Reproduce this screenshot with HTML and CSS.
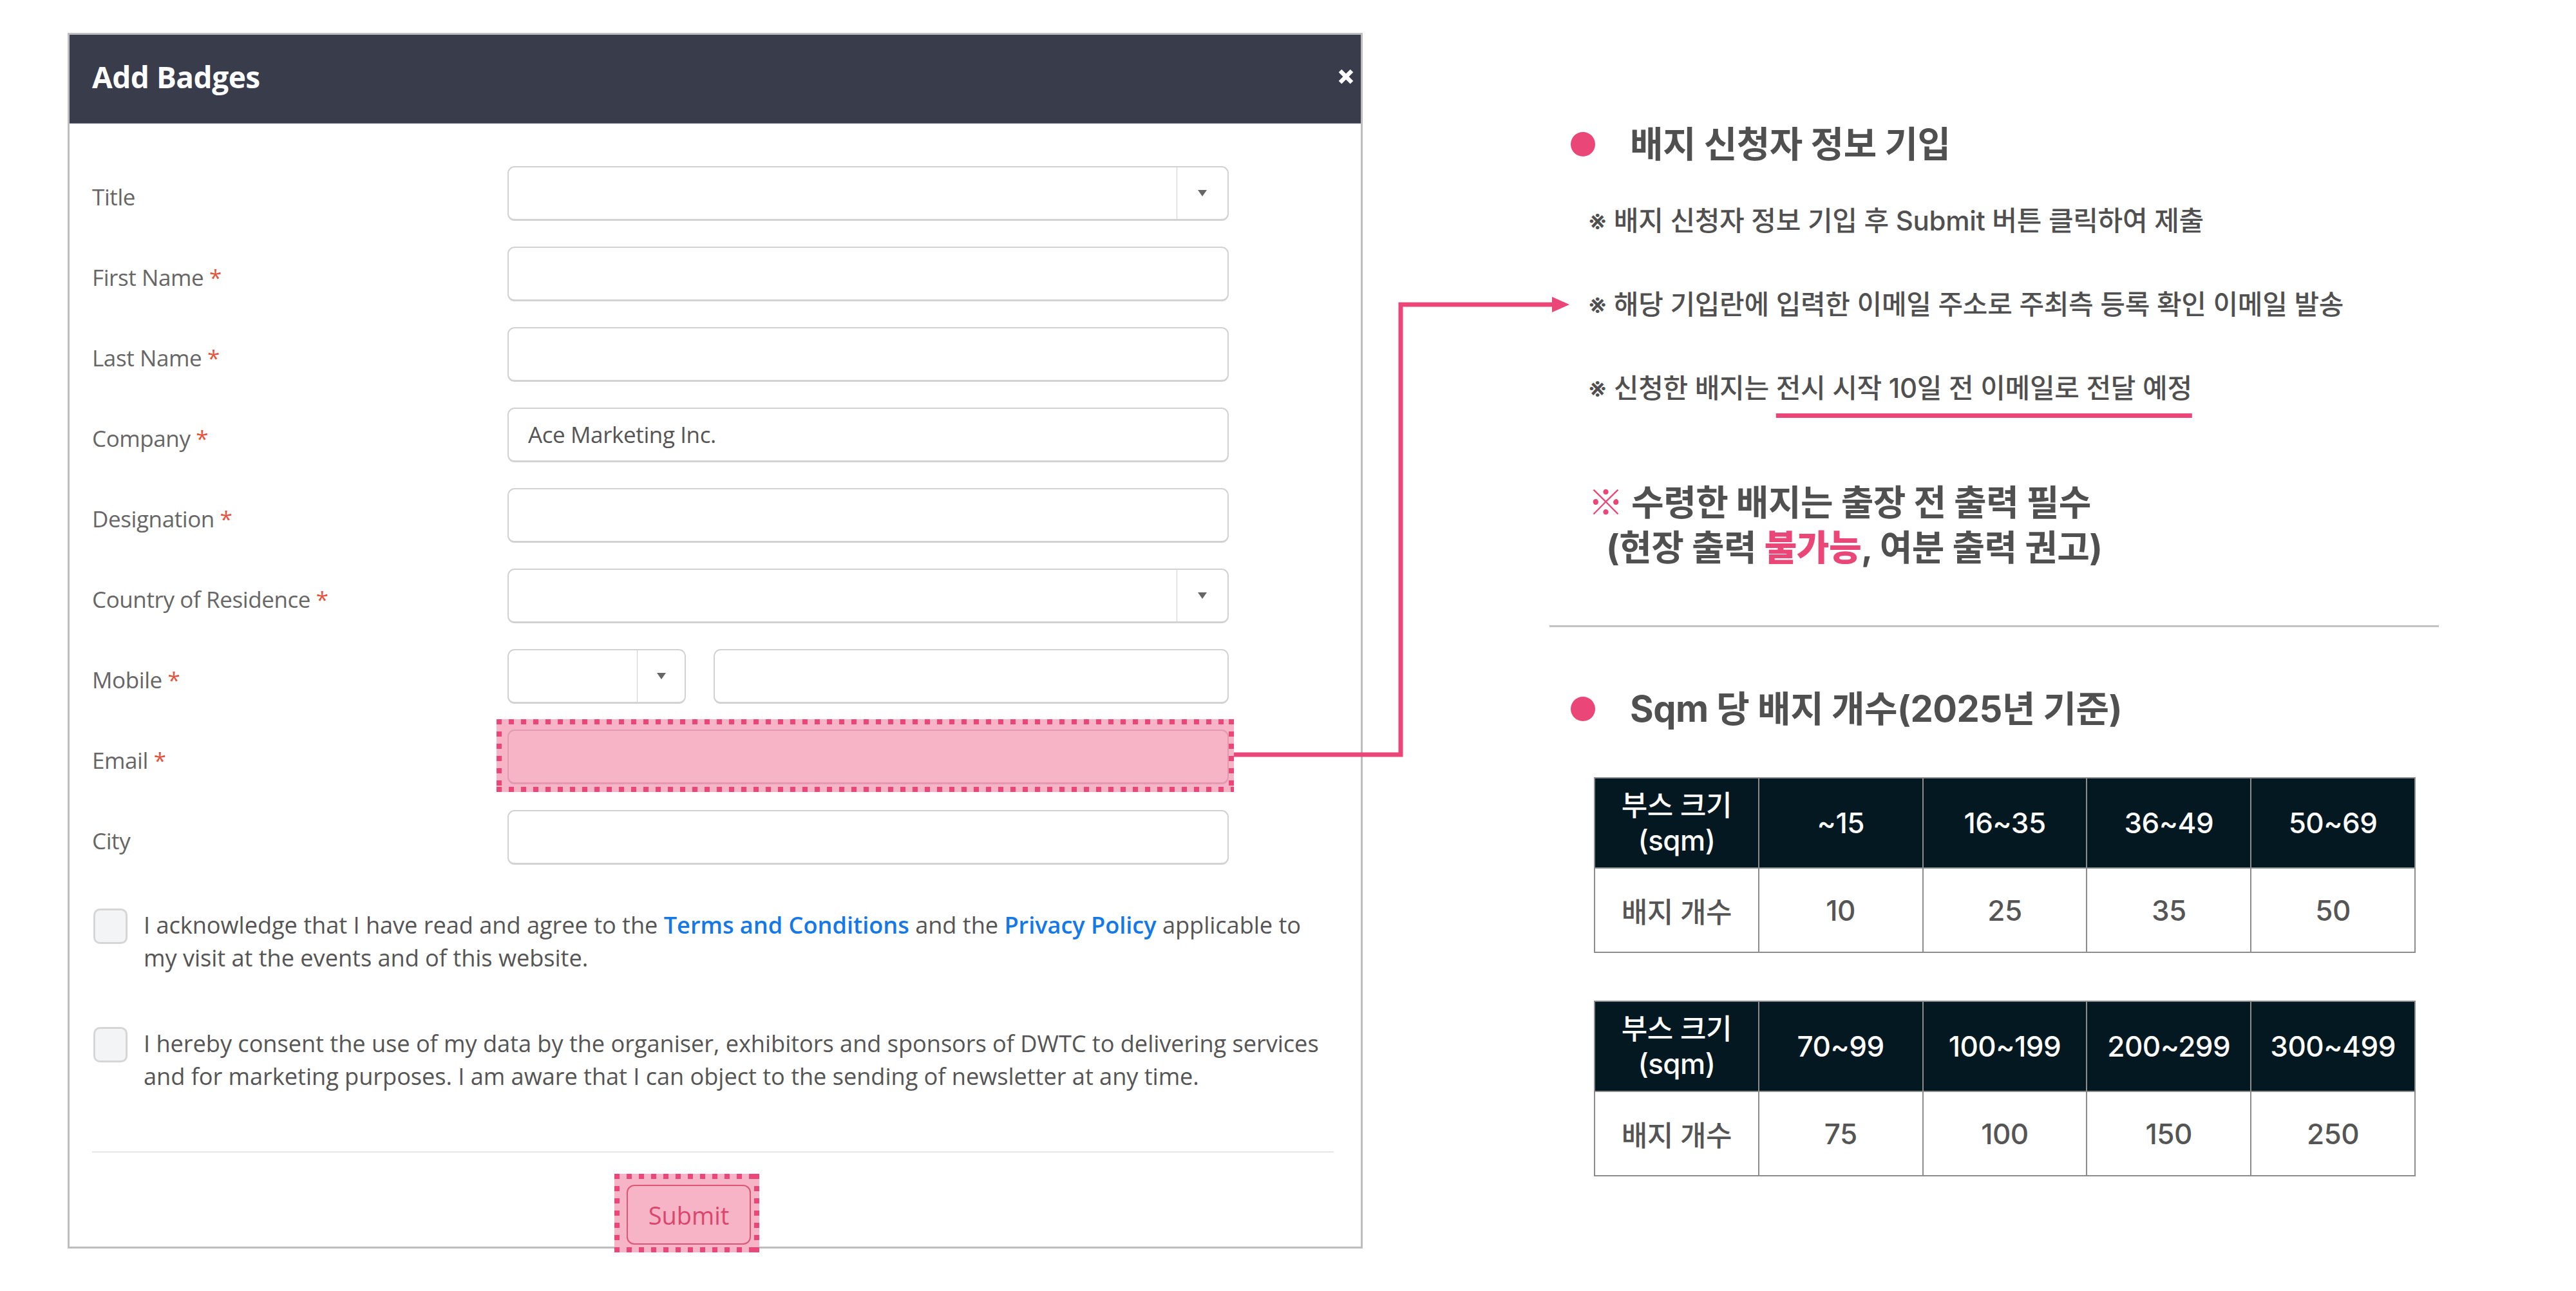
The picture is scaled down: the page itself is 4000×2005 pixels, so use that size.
FILE: index.html
```html
<!DOCTYPE html>
<html lang="ko">
<head>
    <meta charset="UTF-8">
    <title>Add Badges 안내</title>
    <link rel="stylesheet" href="styles.css">
</head>
<body>
<div class="page">

    <!-- Modal: badge form -->
    <div class="modal">
        <div class="modal-head">
            <h2>Add Badges</h2>
            <span class="close">
                <svg width="26" height="26" viewBox="0 0 26 26"><path d="M4 4 L22 22 M22 4 L4 22" stroke="#fff" stroke-width="6.5"/></svg>
            </span>
        </div>

        <div class="modal-body">
            <div class="form-row">
                <label>Title</label>
                <div class="select"><span class="select-btn"><i class="caret"></i></span></div>
            </div>
            <div class="form-row">
                <label>First Name <em>*</em></label>
                <div class="input"></div>
            </div>
            <div class="form-row">
                <label>Last Name <em>*</em></label>
                <div class="input"></div>
            </div>
            <div class="form-row">
                <label>Company <em>*</em></label>
                <div class="input">Ace Marketing Inc.</div>
            </div>
            <div class="form-row">
                <label>Designation <em>*</em></label>
                <div class="input"></div>
            </div>
            <div class="form-row">
                <label>Country of Residence <em>*</em></label>
                <div class="select"><span class="select-btn"><i class="caret"></i></span></div>
            </div>
            <div class="form-row">
                <label>Mobile <em>*</em></label>
                <div class="mobile">
                    <div class="select code"><span class="select-btn"><i class="caret"></i></span></div>
                    <div class="input phone"></div>
                </div>
            </div>
            <div class="form-row">
                <label>Email <em>*</em></label>
                <div class="hl hl-email"><div class="input"></div></div>
            </div>
            <div class="form-row">
                <label>City</label>
                <div class="input"></div>
            </div>

            <div class="consent">
                <span class="check"></span>
                <p>I acknowledge that I have read and agree to the <a href="#">Terms and Conditions</a> and the <a href="#">Privacy Policy</a> applicable to<br>my visit at the events and of this website.</p>
            </div>
            <div class="consent">
                <span class="check"></span>
                <p>I hereby consent the use of my data by the organiser, exhibitors and sponsors of DWTC to delivering services<br>and for marketing purposes. I am aware that I can object to the sending of newsletter at any time.</p>
            </div>
        </div>

        <div class="modal-foot">
            <div class="hl hl-btn"><button>Submit</button></div>
        </div>
    </div>

    <!-- Guide panel -->
    <div class="info">
        <h3 class="dot-title">배지 신청자 정보 기입</h3>
        <ul class="notes">
            <li>※ 배지 신청자 정보 기입 후 Submit 버튼 클릭하여 제출</li>
            <li>※ 해당 기입란에 입력한 이메일 주소로 주최측 등록 확인 이메일 발송</li>
            <li>※ 신청한 배지는 <span class="uline">전시 시작 10일 전 이메일로 전달 예정</span></li>
        </ul>
        <p class="warn"><b class="mark">※</b> 수령한 배지는 출장 전 출력 필수<br><span class="indent">(현장 출력 <b>불가능</b>, 여분 출력 권고)</span></p>

        <hr class="divider">

        <h3 class="dot-title">Sqm 당 배지 개수(2025년 기준)</h3>
        <table class="sqm">
            <tr><th>부스 크기<br>(sqm)</th><th>~15</th><th>16~35</th><th>36~49</th><th>50~69</th></tr>
            <tr><td>배지 개수</td><td>10</td><td>25</td><td>35</td><td>50</td></tr>
        </table>
        <table class="sqm">
            <tr><th>부스 크기<br>(sqm)</th><th>70~99</th><th>100~199</th><th>200~299</th><th>300~499</th></tr>
            <tr><td>배지 개수</td><td>75</td><td>100</td><td>150</td><td>250</td></tr>
        </table>
    </div>

    <!-- Arrow from email field to note -->
    <svg class="connector" width="4000" height="2005" viewBox="0 0 4000 2005">
        <polyline points="1916,1172 2175,1172 2175,473 2414,473" fill="none" stroke="#ea4778" stroke-width="7"/>
        <polygon points="2410,461 2437,473 2410,485" fill="#ea4778"/>
    </svg>
</div>
</body>
</html>
```

FILE: styles.css
```css
/* Layout geral */
body {
    margin: 0;
    background: #fff;
    font-family: "Open Sans", "Noto Sans", sans-serif;
}

.page {
    position: relative;
    display: flex;
    align-items: flex-start;
    width: 4000px;
    height: 2005px;
    padding: 51px 0 0 105px;
    box-sizing: border-box;
}

/* Modal */
.modal {
    width: 2011px;
    border: 3px solid #bdbdbd;
    box-sizing: border-box;
    background: #fff;
}

.modal-head {
    display: flex;
    align-items: center;
    justify-content: space-between;
    height: 138px;
    padding: 0 10px 8px 35px;
    box-sizing: border-box;
    background: #393c4b;
    border-bottom: 1px solid #6c6f7c;
}

.modal-head h2 {
    margin: 0;
    color: #fff;
    font-size: 46px;
    font-weight: 700;
    letter-spacing: -0.5px;
}

.close svg {
    display: block;
}

.modal-body {
    padding: 66px 42px 0 35px;
}

.form-row {
    display: grid;
    grid-template-columns: 645px 1120px;
    height: 85px;
    margin-bottom: 40px;
}

.form-row label {
    align-self: center;
    margin-top: 10px;
    color: #666;
    font-size: 35px;
    letter-spacing: -0.4px;
}

.form-row label em {
    font-style: normal;
    color: #e5533d;
}

.input,
.select {
    position: relative;
    height: 85px;
    box-sizing: border-box;
    border: 2px solid #d2d2d2;
    border-bottom-width: 3px;
    border-radius: 11px;
    background: #fff;
    color: #555;
    font-size: 35px;
    line-height: 80px;
    padding-left: 30px;
    letter-spacing: -0.4px;
}

.select-btn {
    position: absolute;
    top: 0;
    right: 0;
    bottom: 0;
    width: 78px;
    border-left: 1px solid #cfcfcf;
    display: flex;
    align-items: center;
    justify-content: center;
}

.caret {
    width: 0;
    height: 0;
    border-left: 7px solid transparent;
    border-right: 7px solid transparent;
    border-top: 10px solid #666;
}

.mobile {
    display: flex;
    gap: 43px;
}

.select.code {
    width: 277px;
}

.select.code .select-btn {
    width: 73px;
}

.input.phone {
    flex: 1;
}

/* Destaque tracejado */
.hl {
    position: relative;
    z-index: 0;
}

.hl::before {
    content: "";
    position: absolute;
    z-index: -1;
    background:
        linear-gradient(90deg, #ea4778 8px, transparent 0) 0 0 / 19px 8px repeat-x,
        linear-gradient(90deg, #ea4778 8px, transparent 0) 0 100% / 19px 8px repeat-x,
        linear-gradient(180deg, #ea4778 8px, transparent 0) 0 0 / 8px 19px repeat-y,
        linear-gradient(180deg, #ea4778 8px, transparent 0) 100% 0 / 8px 19px repeat-y,
        #f7b4c7;
}

.hl-email::before {
    top: -16px;
    bottom: -12px;
    left: -17px;
    right: -8px;
}

.hl-email .input {
    background: transparent;
    border-color: rgba(160, 60, 90, 0.22);
}

.hl-btn {
    display: inline-block;
}

.hl-btn::before {
    top: -17px;
    bottom: -12px;
    left: -19px;
    right: -13px;
}

/* Consentimentos */
.consent {
    display: flex;
    align-items: flex-start;
    gap: 25px;
    margin-top: 68px;
}

.consent + .consent {
    margin-top: 82px;
}

.check {
    flex: none;
    width: 53px;
    height: 55px;
    margin-left: 2px;
    box-sizing: border-box;
    border: 3px solid #d6d6d6;
    border-radius: 10px;
    background: #f3f4f6;
}

.consent p {
    margin: 0;
    color: #555;
    font-size: 36.2px;
    line-height: 51px;
    letter-spacing: -0.05px;
    white-space: nowrap;
}

.consent a {
    color: #1479e6;
    font-weight: 600;
    text-decoration: none;
}

/* Rodapé do modal */
.modal-foot {
    margin: 91px 42px 0 35px;
    padding: 50px 0 3px 830px;
    border-top: 2px solid #e6e6e6;
    height: 93px;
}

.modal-foot button {
    display: block;
    width: 193px;
    height: 93px;
    border: 2px solid #dc5675;
    border-radius: 12px;
    background: transparent;
    color: #d9476c;
    font-family: "Open Sans", sans-serif;
    font-size: 38px;
    padding: 0;
}

/* Painel de instruções */
.info {
    width: 1381px;
    margin-left: 290px;
    padding-top: 141px;
    font-family: Inter, "Noto Sans CJK KR", sans-serif;
    color: #505050;
}

.dot-title {
    position: relative;
    margin: 0;
    padding-left: 125px;
    font-size: 56px;
    line-height: 64px;
    font-weight: 700;
    letter-spacing: -0.5px;
}

.dot-title::before {
    content: "";
    position: absolute;
    left: 33px;
    top: 13px;
    width: 38px;
    height: 38px;
    border-radius: 50%;
    background: #ea4778;
}

.notes {
    list-style: none;
    margin: 57px 0 0;
    padding: 0 0 0 60px;
}

.notes li {
    font-size: 42px;
    line-height: 60px;
    font-weight: 500;
    letter-spacing: -0.3px;
}

.notes li + li {
    margin-top: 70px;
}

.uline {
    text-decoration: underline;
    text-decoration-color: #ea4778;
    text-decoration-thickness: 7px;
    text-underline-offset: 24px;
    text-decoration-skip-ink: none;
}

.warn {
    margin: 112px 0 0 60px;
    font-size: 55px;
    line-height: 70px;
    font-weight: 700;
    letter-spacing: -0.5px;
}

.warn b {
    color: #ea4778;
}

.warn .mark {
    font-family: "Noto Sans CJK KR", sans-serif;
    font-weight: 500;
    line-height: 1;
}

.warn .indent {
    padding-left: 28px;
}

.divider {
    margin: 86px 0 0;
    border: 0;
    border-top: 3px solid #c2c2c2;
}

.divider + .dot-title {
    margin-top: 95px;
}

.sqm {
    border-collapse: collapse;
    margin: 74px 0 0 69px;
    width: 1276px;
    table-layout: fixed;
}

.sqm + .sqm {
    margin-top: 74px;
}

.sqm th,
.sqm td {
    border: 2px solid #8c8c8c;
    text-align: center;
    font-size: 44px;
    letter-spacing: -0.5px;
}

.sqm th {
    height: 136px;
    background: #041822;
    color: #fff;
    font-weight: 500;
    line-height: 54px;
}

.sqm td {
    height: 127px;
    color: #555;
    font-weight: 500;
}

/* Seta de ligação */
.connector {
    position: absolute;
    left: 0;
    top: 0;
    pointer-events: none;
}
```
